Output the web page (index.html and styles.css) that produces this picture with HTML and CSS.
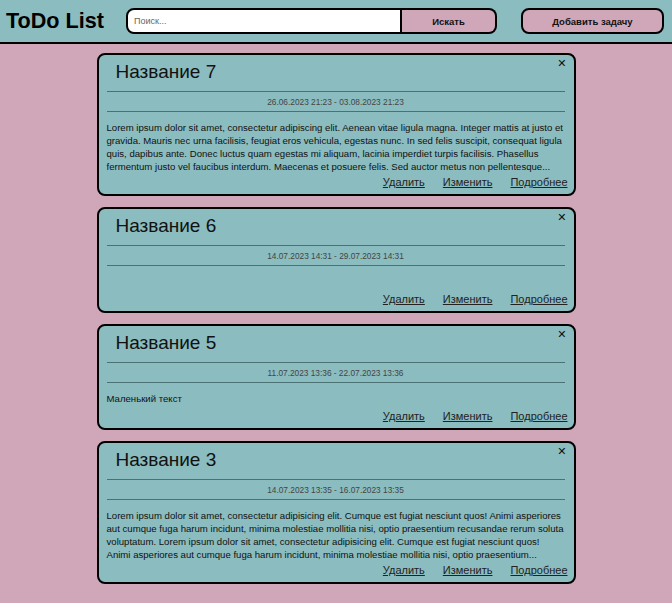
FILE: index.html
```html
<!DOCTYPE html>
<html lang="ru">
<head>
<meta charset="utf-8">
<title>ToDo List</title>
<link rel="stylesheet" href="styles.css">
</head>
<body>
<header class="header">
  <h1 class="logo">ToDo List</h1>
  <form class="search">
    <input class="search-input" type="text" placeholder="Поиск...">
    <button class="search-btn" type="button">Искать</button>
  </form>
  <button class="add-btn" type="button">Добавить задачу</button>
</header>
<main class="list">
  <article class="card">
    <button class="close" type="button">✕</button>
    <h2 class="card-title">Название 7</h2>
    <div class="card-date">26.06.2023 21:23 - 03.08.2023 21:23</div>
    <p class="card-body">Lorem ipsum dolor sit amet, consectetur adipiscing elit. Aenean vitae ligula magna. Integer mattis at justo et gravida. Mauris nec urna facilisis, feugiat eros vehicula, egestas nunc. In sed felis suscipit, consequat ligula quis, dapibus ante. Donec luctus quam egestas mi aliquam, lacinia imperdiet turpis facilisis. Phasellus fermentum justo vel faucibus interdum. Maecenas et posuere felis. Sed auctor metus non pellentesque...</p>
    <div class="card-links"><a href="#">Удалить</a><a href="#">Изменить</a><a href="#">Подробнее</a></div>
  </article>
  <article class="card">
    <button class="close" type="button">✕</button>
    <h2 class="card-title">Название 6</h2>
    <div class="card-date">14.07.2023 14:31 - 29.07.2023 14:31</div>
    <p class="card-body"></p>
    <div class="card-links"><a href="#">Удалить</a><a href="#">Изменить</a><a href="#">Подробнее</a></div>
  </article>
  <article class="card">
    <button class="close" type="button">✕</button>
    <h2 class="card-title">Название 5</h2>
    <div class="card-date">11.07.2023 13:36 - 22.07.2023 13:36</div>
    <p class="card-body">Маленький текст</p>
    <div class="card-links"><a href="#">Удалить</a><a href="#">Изменить</a><a href="#">Подробнее</a></div>
  </article>
  <article class="card">
    <button class="close" type="button">✕</button>
    <h2 class="card-title">Название 3</h2>
    <div class="card-date">14.07.2023 13:35 - 16.07.2023 13:35</div>
    <p class="card-body">Lorem ipsum dolor sit amet, consectetur adipisicing elit. Cumque est fugiat nesciunt quos! Animi asperiores aut cumque fuga harum incidunt, minima molestiae mollitia nisi, optio praesentium recusandae rerum soluta voluptatum. Lorem ipsum dolor sit amet, consectetur adipisicing elit. Cumque est fugiat nesciunt quos! Animi asperiores aut cumque fuga harum incidunt, minima molestiae mollitia nisi, optio praesentium...</p>
    <div class="card-links"><a href="#">Удалить</a><a href="#">Изменить</a><a href="#">Подробнее</a></div>
  </article>
</main>
</body>
</html>
```

FILE: styles.css
```css
* { box-sizing: border-box; }

body {
  margin: 0;
  background: #cfa7b9;
  font-family: "Liberation Sans", Arial, sans-serif;
  color: #111;
}

.header {
  display: flex;
  align-items: center;
  height: 44px;
  padding: 0 8px 0 6px;
  background: #8bbcbf;
  border-bottom: 2px solid #000;
}

.logo {
  margin: 0 22px 0 0;
  font-size: 21.6px;
  font-weight: bold;
  color: #000;
  line-height: 1;
}

.search {
  display: flex;
  width: 371px;
  height: 26px;
  margin: 0;
}

.search-input {
  width: 276px;
  height: 26px;
  border: 2px solid #000;
  border-radius: 8px 0 0 8px;
  background: #fff;
  padding: 0 6px;
  font-family: "Liberation Sans", Arial, sans-serif;
  font-size: 9px;
  outline: none;
}

.search-input::placeholder { color: #666; }

.search-btn {
  width: 95px;
  height: 26px;
  border: 2px solid #000;
  border-left: none;
  border-radius: 0 8px 8px 0;
  background: #cfa7b9;
  font-family: "Liberation Sans", Arial, sans-serif;
  font-size: 9.5px;
  font-weight: bold;
  color: #111;
  padding: 0;
}

.add-btn {
  margin-left: 24px;
  width: 143px;
  height: 26px;
  border: 2px solid #000;
  border-radius: 8px;
  background: #cfa7b9;
  font-family: "Liberation Sans", Arial, sans-serif;
  font-size: 9.5px;
  font-weight: bold;
  color: #111;
  padding: 0;
}

.list {
  display: flex;
  flex-direction: column;
  align-items: center;
  gap: 11px;
  padding: 9px 0 20px;
}

.card {
  position: relative;
  width: 479px;
  background: #8bbcbf;
  border: 2px solid #000;
  border-radius: 8px;
  padding: 0 9px 5px 8px;
}

.close {
  position: absolute;
  top: 3px;
  right: 7px;
  border: none;
  background: none;
  padding: 0;
  font-family: "DejaVu Sans", sans-serif;
  font-size: 11px;
  font-weight: bold;
  color: #111;
  line-height: 12px;
}

.card-title {
  margin: 6px 0 0;
  padding: 0 0 8px 9px;
  font-size: 19px;
  font-weight: normal;
  line-height: 22px;
  color: #111;
  border-bottom: 1px solid #4a7274;
}

.card-date {
  height: 20px;
  line-height: 20px;
  text-align: center;
  font-size: 8.3px;
  color: #444;
  border-bottom: 1px solid #4a7274;
}

.card-body {
  margin: 0;
  padding: 9px 0 3px;
  min-height: 27px;
  font-size: 9.6px;
  line-height: 13px;
  color: #111;
}

.card-links {
  display: flex;
  justify-content: flex-end;
  gap: 18px;
  margin-right: -3px;
  line-height: 13px;
}

.card-links a {
  font-size: 11px;
  color: #222;
  text-decoration: underline;
}
```
